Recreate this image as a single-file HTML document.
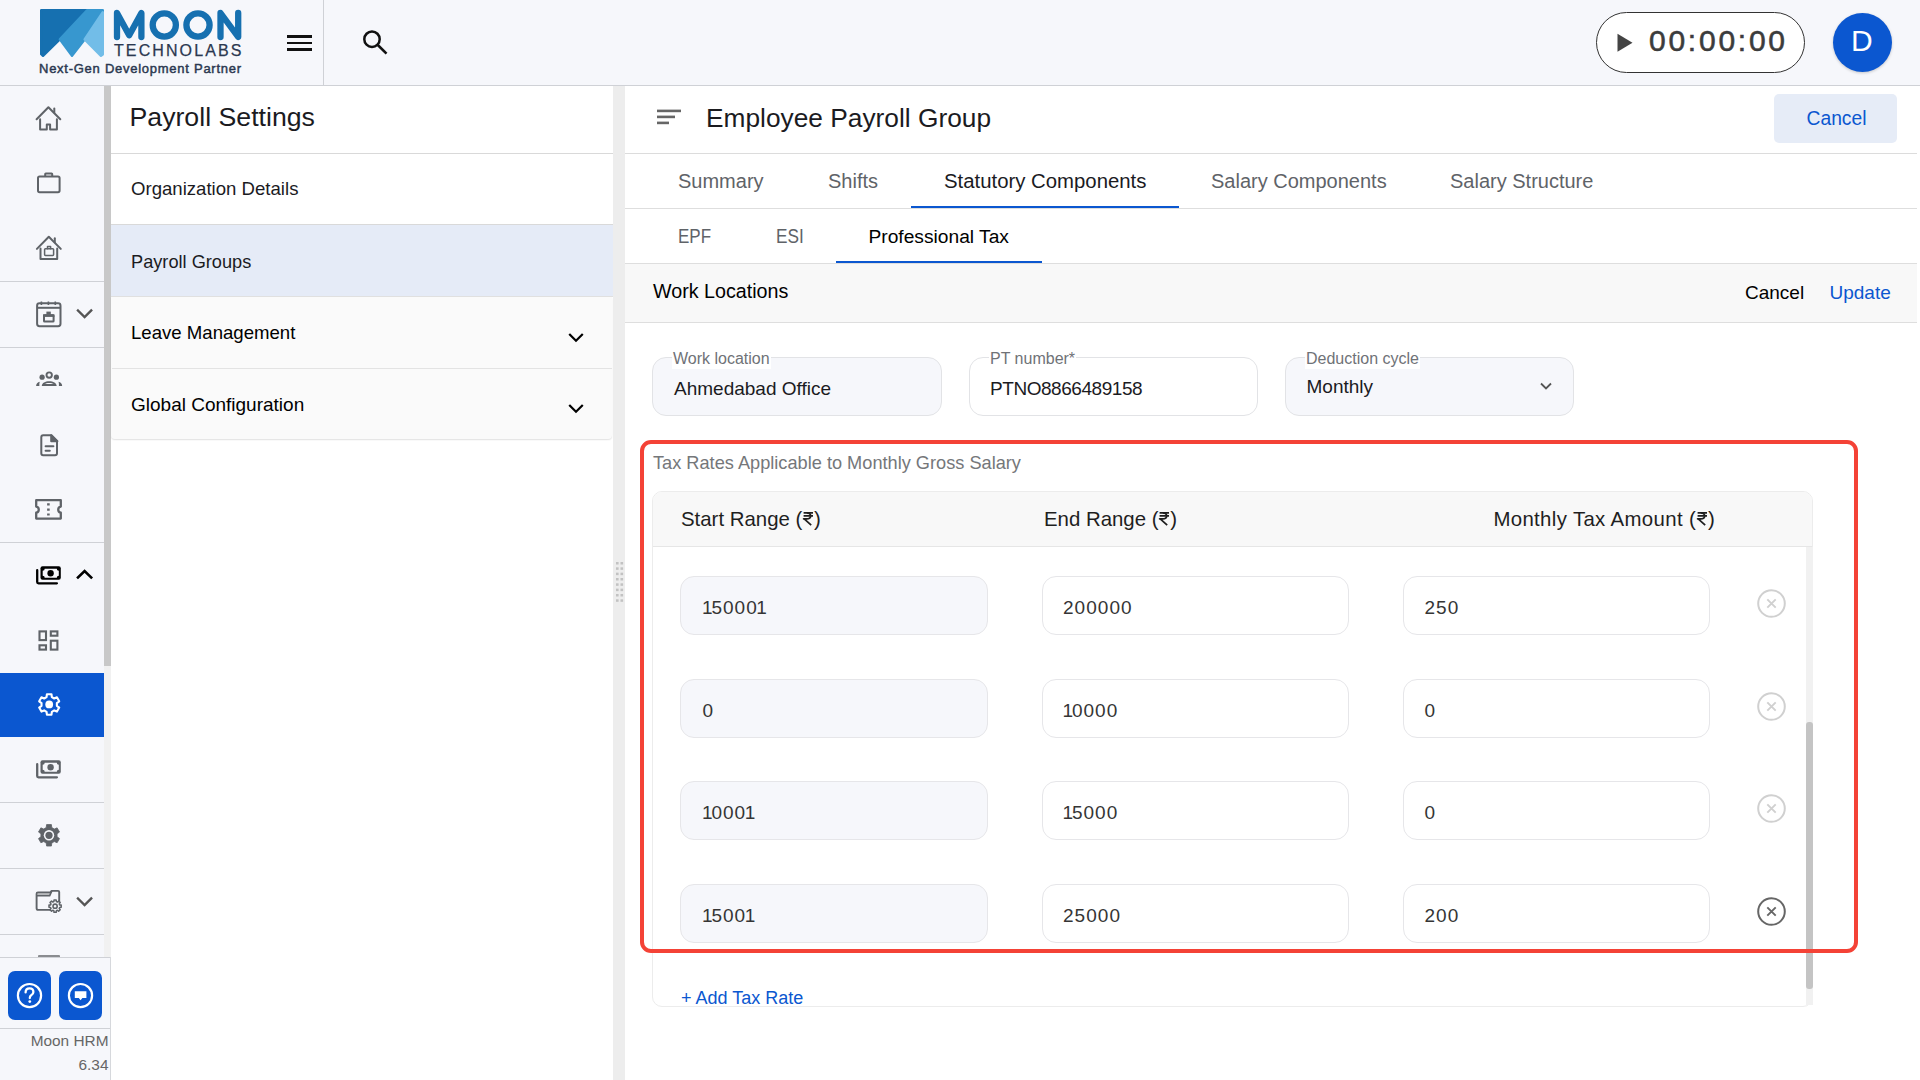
<!DOCTYPE html>
<html><head><meta charset="utf-8"><title>Payroll Settings</title>
<style>
*{margin:0;padding:0;box-sizing:border-box}
html,body{width:1920px;height:1080px;overflow:hidden;background:#fff;font-family:"Liberation Sans",sans-serif;color:#1f1f1f}
.a{position:absolute}
.t{position:absolute;white-space:nowrap;line-height:1}
svg{position:absolute;overflow:visible}
#hdr{left:0;top:0;width:1920px;height:85px;background:#f6f7fb}
#hdrb{left:0;top:85px;width:1920px;height:1px;background:#cfd1d6}
#nav{left:0;top:86px;width:104px;height:871px;background:#f6f7fb}
#navsb{left:104px;top:86px;width:7px;height:871px;background:#f1f1f1}
#navth{left:104px;top:86px;width:7px;height:580px;background:#c8c8c8}
.ndiv{position:absolute;left:0;width:104px;height:1px;background:#cfd1d6}
#panel{left:111px;top:86px;width:502px;height:994px;background:#fff}
#resz{left:613px;top:86px;width:12px;height:994px;background:#ededed}
#main{left:625px;top:86px;width:1295px;height:994px;background:#fff}
.hl{position:absolute;height:1px;background:#dedede}
.fld{position:absolute;height:59px;border:1px solid #e2e3e6;border-radius:14px;background:#f6f7fb}
.fld.w{background:#fff}
.lbl{position:absolute;background:#fff;color:#6f7277;font-size:16px;line-height:1;white-space:nowrap;padding:0 1px}
.inp{position:absolute;height:59px;border:1px solid #e6e6e9;border-radius:14px;background:#fff}
.inp.g{background:#f6f7fb}
.val{position:absolute;color:#333;font-size:19px;line-height:1;white-space:nowrap}
</style></head><body>

<!-- Top header -->
<div id="hdr" class="a"></div>
<div id="hdrb" class="a"></div>
<div class="a" style="left:323px;top:0;width:1px;height:85px;background:#cfd1d6"></div>

<!-- logo -->
<svg style="left:40px;top:9px" width="64" height="48" viewBox="0 0 64 48">
 <g stroke-linejoin="round" stroke-width="2.4">
 <polygon points="1.2,1.2 47,1.2 19.8,30.4 3,46.8 1.2,45.2" fill="#1670b0" stroke="#1670b0"/>
 <polygon points="47,1.2 62.8,1.2 62.8,3.2 44.6,30.4 32,46.8 19.8,30.4" fill="#3797cf" stroke="#3797cf"/>
 <polygon points="62.8,3.2 62.8,45.6 61,46.8 44.6,30.4" fill="#72bde8" stroke="#72bde8"/>
 </g>
</svg>
<svg style="left:110px;top:6px" width="136" height="38" viewBox="0 0 136 38">
 <g fill="none" stroke="#1670b0" stroke-width="6.3" stroke-linecap="round" stroke-linejoin="round">
  <path d="M7,31 V7 L19.2,29.2 L31.4,7 V31"/>
  <circle cx="54.3" cy="19" r="11.6"/>
  <circle cx="88" cy="19" r="11.6"/>
  <path d="M110.5,31 V7 L128.2,31 V7"/>
 </g>
</svg>
<div class="t" style="left:114px;top:42.8px;font-size:16px;letter-spacing:2.1px;color:#2b3850;-webkit-text-stroke:0.25px #2b3850">TECHNOLABS</div>
<div class="t" style="left:39px;top:62px;font-size:13px;letter-spacing:0.74px;color:#2b3850;-webkit-text-stroke:0.45px #2b3850">Next-Gen Development Partner</div>

<!-- hamburger -->
<div class="a" style="left:287px;top:35px;width:25px;height:2.6px;background:#111"></div>
<div class="a" style="left:287px;top:41.7px;width:25px;height:2.6px;background:#111"></div>
<div class="a" style="left:287px;top:48.2px;width:25px;height:2.6px;background:#111"></div>
<!-- search -->
<svg style="left:360px;top:27px" width="30" height="30" viewBox="0 0 30 30">
 <circle cx="12" cy="12.2" r="7.7" fill="none" stroke="#111" stroke-width="2.5"/>
 <path d="M17.8,18 L26.5,26.6" stroke="#111" stroke-width="2.6"/>
</svg>

<!-- timer -->
<div class="a" style="left:1596px;top:12px;width:209px;height:61px;border:1.2px solid #333;border-radius:31px;background:#fff"></div>
<svg style="left:1617px;top:33px" width="16" height="20" viewBox="0 0 16 20"><path d="M0.5,0.8 L15.5,9.7 L0.5,18.8 Z" fill="#444"/></svg>
<div class="t" style="left:1649px;top:26px;font-size:30px;letter-spacing:2.75px;color:#3c3c3c;-webkit-text-stroke:0.55px #3c3c3c">00:00:00</div>

<!-- avatar -->
<div class="a" style="left:1833px;top:13px;width:59px;height:59px;border-radius:50%;background:#0b57d0;box-shadow:0 1px 3px rgba(0,0,0,.2)"></div>
<div class="t" style="left:1851px;top:26px;font-size:30px;color:#fff">D</div>

<!-- Left nav -->
<div id="nav" class="a"></div>
<div id="navsb" class="a"></div>
<div id="navth" class="a"></div>


<!-- nav dividers -->
<div class="ndiv" style="top:281px"></div>
<div class="ndiv" style="top:347px"></div>
<div class="ndiv" style="top:542px"></div>
<div class="ndiv" style="top:802px"></div>
<div class="ndiv" style="top:868px"></div>
<div class="ndiv" style="top:934px"></div>
<!-- active -->
<div class="a" style="left:0;top:673px;width:104px;height:64px;background:#0b57d0"></div>

<!-- home -->
<svg style="left:32px;top:102px" width="34" height="34" viewBox="0 0 34 34" fill="none" stroke="#5f6368" stroke-width="2" stroke-linecap="round" stroke-linejoin="round">
 <path d="M4.6,17.2 L16.4,5.2 L28.3,17.2"/><path d="M22.3,6.5 V10.6"/>
 <path d="M8.1,17.2 V27.4 H14.8 V22.5 H18.1 V27.4 H24.9 V17.2"/>
</svg>
<!-- briefcase -->
<svg style="left:32px;top:166px" width="34" height="34" viewBox="0 0 34 34" fill="none" stroke="#5f6368" stroke-width="2" stroke-linejoin="round">
 <rect x="6" y="10.4" width="21.6" height="15.8" rx="1.6"/>
 <path d="M13.2,10.4 V8 Q13.2,7.4 13.8,7.4 H19.6 Q20.2,7.4 20.2,8 V10.4"/>
</svg>
<!-- home work -->
<svg style="left:32px;top:230px" width="34" height="34" viewBox="0 0 34 34" fill="none" stroke="#5f6368" stroke-width="2" stroke-linecap="round" stroke-linejoin="round">
 <path d="M4.9,18.9 L16.8,6.8 L28.8,18.9"/><path d="M22.8,8.3 V12.3"/>
 <path d="M8.5,18.6 V29 H25.2 V18.6"/>
 <rect x="12.6" y="18.8" width="9" height="6.6" rx="0.8" stroke-width="1.5"/>
 <path d="M15.5,18.8 V16.6 H18.6 V18.8" stroke-width="1.5"/>
</svg>
<!-- calendar work -->
<svg style="left:32px;top:296px" width="34" height="34" viewBox="0 0 34 34" fill="none" stroke="#5f6368" stroke-width="2" stroke-linejoin="round">
 <rect x="5.1" y="7.3" width="23.4" height="22.9" rx="2.4"/>
 <path d="M5.1,11.8 H28.5"/>
 <path d="M9.4,5.6 V9 M16.4,5.6 V9 M23.3,5.6 V9" stroke-width="1.6"/>
 <rect x="12" y="19.2" width="9.6" height="6.4" rx="0.6"/>
 <rect x="14.4" y="15.6" width="4.4" height="3" fill="#5f6368" stroke="none"/>
 <rect x="11" y="18.3" width="11.4" height="2.6" fill="#5f6368" stroke="none"/>
</svg>
<svg style="left:76px;top:308px" width="18" height="12" viewBox="0 0 18 12" fill="none" stroke="#555" stroke-width="2.4" stroke-linecap="square"><path d="M2,2.5 L8.6,9 L15.2,2.5"/></svg>
<!-- groups -->
<svg style="left:32px;top:362px" width="34" height="34" viewBox="0 0 34 34" fill="#5f6368">
 <circle cx="17.2" cy="13.1" r="2.7" fill="none" stroke="#5f6368" stroke-width="1.9"/>
 <circle cx="10.1" cy="15.2" r="2.6"/><circle cx="24.4" cy="15.2" r="2.6"/>
 <path d="M9.8,23.9 C10,20.8 13.2,19.2 17.2,19.2 C21.2,19.2 24.4,20.8 24.7,23.9 Z M12.8,22.1 H21.7 C20.8,21.2 19.2,20.9 17.2,20.9 C15.2,20.9 13.6,21.2 12.8,22.1 Z" fill-rule="evenodd"/>
 <path d="M4.1,23.9 C4.1,21.8 5.6,20.3 7.8,19.8 C7.3,21 7.3,22.6 7.4,23.9 Z"/>
 <path d="M30.2,23.9 C30.2,21.8 28.7,20.3 26.5,19.8 C27,21 27,22.6 26.9,23.9 Z"/>
</svg>
<!-- document -->
<svg style="left:32px;top:428px" width="34" height="34" viewBox="0 0 34 34" fill="none" stroke="#5f6368" stroke-width="2" stroke-linejoin="round">
 <path d="M11.2,7.3 H19.4 L25,12.9 V25.2 Q25,27.2 23,27.2 H11.2 Q9.3,27.2 9.3,25.2 V9.3 Q9.3,7.3 11.2,7.3 Z"/>
 <path d="M19.2,7.3 V13.2 H25.4 Z" fill="#5f6368"/>
 <path d="M13.6,18.3 H21.4 M13.6,22.8 H17.8" stroke-linecap="round"/>
</svg>
<!-- ticket -->
<svg style="left:32px;top:492px" width="34" height="34" viewBox="0 0 34 34" fill="none" stroke="#5f6368" stroke-width="2.3" stroke-linejoin="round">
 <path d="M4.2,8.2 H28.8 V14.6 A3.1,3.1 0 0 0 28.8,20.7 V26.6 H4.2 V20.7 A3.1,3.1 0 0 0 4.2,14.6 Z"/>
 <path d="M16.4,11.2 V13.4 M16.4,16.5 V18.7 M16.4,21.4 V23.6" stroke-width="2.6"/>
</svg>
<!-- payments black -->
<svg style="left:32px;top:558px" width="34" height="34" viewBox="0 0 34 34">
 <rect x="8.5" y="8.3" width="20.3" height="13.4" rx="2" fill="#000"/>
 <path d="M12.7,10.7 H24.8 A2,2 0 0 0 26.8,12.7 V17.8 A2,2 0 0 0 24.8,19.8 H12.7 A2,2 0 0 0 10.7,17.8 V12.7 A2,2 0 0 0 12.7,10.7 Z" fill="#f6f7fb"/>
 <circle cx="18.6" cy="15.3" r="3.2" fill="#000"/>
 <path d="M5.2,12.2 V24 Q5.2,25.3 6.5,25.3 H24.9" fill="none" stroke="#000" stroke-width="2.3" stroke-linecap="round"/>
</svg>
<svg style="left:76px;top:568px" width="18" height="12" viewBox="0 0 18 12" fill="none" stroke="#000" stroke-width="2.6" stroke-linecap="square"><path d="M2,9.5 L8.6,3 L15.2,9.5"/></svg>
<!-- dashboard -->
<svg style="left:32px;top:623px" width="34" height="34" viewBox="0 0 34 34" fill="none" stroke="#5f6368" stroke-width="2.1">
 <rect x="7.5" y="8.4" width="6.5" height="8.7"/><rect x="18.8" y="8.4" width="6.6" height="4.3"/>
 <rect x="7.5" y="22.3" width="6.5" height="4.3"/><rect x="18.8" y="17.7" width="6.6" height="8.9"/>
</svg>


<!-- gear active -->
<svg style="left:32px;top:687px" width="34" height="34" viewBox="0 0 34 34">
 <path d="M14.56,10.11 L14.91,7.20 L19.49,7.20 L19.84,10.11 L22.23,11.49 L24.93,10.34 L27.22,14.31 L24.88,16.07 L24.88,18.83 L27.22,20.59 L24.93,24.56 L22.23,23.41 L19.84,24.79 L19.49,27.70 L14.91,27.70 L14.56,24.79 L12.17,23.41 L9.47,24.56 L7.18,20.59 L9.52,18.83 L9.52,16.07 L7.18,14.31 L9.47,10.34 L12.17,11.49 Z" fill="none" stroke="#fff" stroke-width="2.1" stroke-linejoin="round"/>
 <circle cx="17.2" cy="17.45" r="3.9" fill="#fff"/>
</svg>
<!-- payments gray -->
<svg style="left:32px;top:752px" width="34" height="34" viewBox="0 0 34 34">
 <rect x="8.5" y="8.3" width="20.3" height="13.4" rx="2" fill="#5f6368"/>
 <path d="M12.7,10.7 H24.8 A2,2 0 0 0 26.8,12.7 V17.8 A2,2 0 0 0 24.8,19.8 H12.7 A2,2 0 0 0 10.7,17.8 V12.7 A2,2 0 0 0 12.7,10.7 Z" fill="#f6f7fb"/>
 <circle cx="18.6" cy="15.3" r="3.2" fill="#5f6368"/>
 <path d="M5.2,12.2 V24 Q5.2,25.3 6.5,25.3 H24.9" fill="none" stroke="#5f6368" stroke-width="2.3" stroke-linecap="round"/>
</svg>
<!-- gear gray filled -->
<svg style="left:32px;top:818px" width="34" height="34" viewBox="0 0 34 34">
 <path d="M14.22,9.58 L14.60,6.56 L19.40,6.56 L19.78,9.58 L22.29,11.04 L25.10,9.85 L27.50,14.01 L25.07,15.85 L25.07,18.75 L27.50,20.59 L25.10,24.75 L22.29,23.56 L19.78,25.02 L19.40,28.04 L14.60,28.04 L14.22,25.02 L11.71,23.56 L8.90,24.75 L6.50,20.59 L8.93,18.75 L8.93,15.85 L6.50,14.01 L8.90,9.85 L11.71,11.04 Z" fill="#5f6368" stroke="#5f6368" stroke-width="0.8" stroke-linejoin="round"/>
 <circle cx="17" cy="17.3" r="5.2" fill="#f6f7fb"/>
 <circle cx="17" cy="17.3" r="3.6" fill="#5f6368"/>
</svg>
<!-- folder gear -->
<svg style="left:32px;top:884px" width="34" height="34" viewBox="0 0 34 34" fill="none" stroke="#5f6368" stroke-width="1.9" stroke-linejoin="round">
 <path d="M18.5,25.9 H6.2 Q4.6,25.9 4.6,24.3 V9.8 Q4.6,8.5 5.9,8.5 H18.4 L19.7,6.9 H26 Q27.2,6.9 27.2,8.1 V18.3"/>
 <path d="M4.6,11.6 H17.6 L19.7,6.9" />
 <path d="M5.6,9.4 H17.8 L17.2,10.8 H5.6 Z" fill="#aeafb2" stroke="none"/>
 <path d="M21.84,17.67 L22.01,16.10 L24.19,16.10 L24.36,17.67 L25.41,18.11 L26.65,17.11 L28.19,18.65 L27.19,19.89 L27.63,20.94 L29.20,21.11 L29.20,23.29 L27.63,23.46 L27.19,24.51 L28.19,25.75 L26.65,27.29 L25.41,26.29 L24.36,26.73 L24.19,28.30 L22.01,28.30 L21.84,26.73 L20.79,26.29 L19.55,27.29 L18.01,25.75 L19.01,24.51 L18.57,23.46 L17.00,23.29 L17.00,21.11 L18.57,20.94 L19.01,19.89 L18.01,18.65 L19.55,17.11 L20.79,18.11 Z" stroke-width="1.5"/>
 <circle cx="23.1" cy="22.2" r="2.1" stroke-width="1.6"/>
</svg>
<svg style="left:76px;top:896px" width="18" height="12" viewBox="0 0 18 12" fill="none" stroke="#555" stroke-width="2.4" stroke-linecap="square"><path d="M2,2.5 L8.6,9 L15.2,2.5"/></svg>
<!-- partial icon -->
<div class="a" style="left:38px;top:955px;width:22px;height:2px;background:#8a8c90;border-radius:1px 1px 0 0"></div>

<!-- bottom section -->
<div class="a" style="left:0;top:957px;width:111px;height:123px;background:#f6f7fb"></div>
<div class="a" style="left:0;top:957px;width:111px;height:1px;background:#cfd1d6"></div>
<div class="a" style="left:0;top:1028px;width:111px;height:1px;background:#cfd1d6"></div>
<div class="a" style="left:110px;top:957px;width:1px;height:123px;background:#d6d8dc"></div>
<div class="a" style="left:8px;top:971px;width:43px;height:49px;border-radius:7px;background:#0b57d0"></div>
<div class="a" style="left:59px;top:971px;width:43px;height:49px;border-radius:7px;background:#0b57d0"></div>
<svg style="left:8px;top:971px" width="43" height="49" viewBox="0 0 43 49">
 <circle cx="21.5" cy="24.6" r="11.6" fill="none" stroke="#fff" stroke-width="2.2"/>
 <path d="M17.6,21.4 Q17.6,17.4 21.6,17.4 Q25.4,17.4 25.4,21 Q25.4,23 23.2,24.2 Q21.8,25 21.8,27" fill="none" stroke="#fff" stroke-width="2.3" stroke-linecap="round"/>
 <circle cx="21.8" cy="30.6" r="1.4" fill="#fff"/>
</svg>
<svg style="left:59px;top:971px" width="43" height="49" viewBox="0 0 43 49">
 <circle cx="21.5" cy="24.6" r="11.6" fill="none" stroke="#fff" stroke-width="2.2"/>
 <path d="M15.8,20.2 H27.4 V27 H23.4 L21.6,29.2 L19.8,27 H15.8 Z" fill="#fff"/>
</svg>
<div class="t" style="right:1811.5px;top:1033.3px;font-size:15.4px;color:#666">Moon HRM</div>
<div class="t" style="right:1811.5px;top:1057.3px;font-size:15.4px;color:#666">6.34</div>

<!-- Payroll panel -->
<div id="panel" class="a"></div>
<div class="t" style="left:129.5px;top:103.90px;font-size:26.7px;color:#1b1b1f;">Payroll Settings</div>
<div class="hl" style="left:111px;top:153px;width:502px;background:#d9d9d9"></div>
<div class="t" style="left:131px;top:179.92px;font-size:18.6px;color:#1b1b1f;">Organization Details</div>
<div class="hl" style="left:111px;top:224px;width:502px;background:#d9d9d9"></div>
<div class="a" style="left:111px;top:225px;width:502px;height:71px;background:#e5ebf7"></div>
<div class="t" style="left:131px;top:252.59px;font-size:18.2px;color:#1b1b1f;">Payroll Groups</div>
<div class="a" style="left:111px;top:296px;width:502px;height:1px;background:#e0e0e0"></div>
<div class="a" style="left:111px;top:297px;width:501px;height:142px;background:#fafafa;box-shadow:0 1px 1.5px rgba(0,0,0,.12);border-radius:0 0 4px 4px"></div>
<div class="a" style="left:112px;top:368px;width:500px;height:1px;background:#e3e3e3"></div>
<div class="t" style="left:131px;top:323.76px;font-size:18.6px;color:#000;">Leave Management</div>
<div class="t" style="left:131px;top:394.92px;font-size:19px;color:#000;">Global Configuration</div>
<svg style="left:567px;top:332px" width="18" height="12" viewBox="0 0 18 12" fill="none" stroke="#000" stroke-width="2.2" stroke-linecap="square"><path d="M3,2.8 L9,8.8 L15,2.8"/></svg>
<svg style="left:567px;top:403px" width="18" height="12" viewBox="0 0 18 12" fill="none" stroke="#000" stroke-width="2.2" stroke-linecap="square"><path d="M3,2.8 L9,8.8 L15,2.8"/></svg>
<div id="resz" class="a"></div>
<svg style="left:616.2px;top:562px" width="8" height="42" viewBox="0 0 8 42" fill="#c2c2c2"><rect x="0" y="0.00" width="2.6" height="2.5"/><rect x="4.5" y="0.00" width="2.6" height="2.5"/><rect x="0" y="5.33" width="2.6" height="2.5"/><rect x="4.5" y="5.33" width="2.6" height="2.5"/><rect x="0" y="10.66" width="2.6" height="2.5"/><rect x="4.5" y="10.66" width="2.6" height="2.5"/><rect x="0" y="15.99" width="2.6" height="2.5"/><rect x="4.5" y="15.99" width="2.6" height="2.5"/><rect x="0" y="21.32" width="2.6" height="2.5"/><rect x="4.5" y="21.32" width="2.6" height="2.5"/><rect x="0" y="26.65" width="2.6" height="2.5"/><rect x="4.5" y="26.65" width="2.6" height="2.5"/><rect x="0" y="31.98" width="2.6" height="2.5"/><rect x="4.5" y="31.98" width="2.6" height="2.5"/><rect x="0" y="37.31" width="2.6" height="2.5"/><rect x="4.5" y="37.31" width="2.6" height="2.5"/></svg>


<!-- Main -->
<div id="main" class="a"></div>
<svg style="left:657px;top:109px" width="24" height="17" viewBox="0 0 24 17"><rect x="0" y="0.6" width="24" height="2.6" fill="#666"/><rect x="0" y="6.6" width="18" height="2.6" fill="#666"/><rect x="0" y="12.6" width="12" height="2.6" fill="#666"/></svg>
<div class="t" style="left:706px;top:104.54px;font-size:26.3px;color:#1b1b1f;">Employee Payroll Group</div>
<div class="a" style="left:1774px;top:94px;width:123px;height:49px;border-radius:5px;background:#e6ecf7"></div>
<div class="t" style="left:1806.5px;top:108.56px;font-size:19.3px;color:#0b57d0;">Cancel</div>
<div class="hl" style="left:625px;top:153px;width:1292px;background:#dcdcdc"></div>
<div class="t" style="left:678px;top:171.37px;font-size:20px;color:#5f6368;">Summary</div>
<div class="t" style="left:828px;top:171.37px;font-size:20px;color:#5f6368;">Shifts</div>
<div class="t" style="left:944px;top:171.07px;font-size:20.35px;color:#1b1b1f;">Statutory Components</div>
<div class="t" style="left:1211px;top:171.37px;font-size:20px;color:#5f6368;">Salary Components</div>
<div class="t" style="left:1450px;top:171.37px;font-size:20px;color:#5f6368;">Salary Structure</div>
<div class="hl" style="left:625px;top:208px;width:1292px;background:#dedede"></div>
<div class="a" style="left:911px;top:205.5px;width:268px;height:2.5px;background:#0b57d0"></div>
<div class="t" style="left:678px;top:226.07px;font-size:20px;color:#5f6368;transform:scaleX(0.85);transform-origin:0 0;">EPF</div>
<div class="t" style="left:776px;top:226.07px;font-size:20px;color:#5f6368;transform:scaleX(0.86);transform-origin:0 0;">ESI</div>
<div class="t" style="left:868.5px;top:226.75px;font-size:19.2px;color:#000;">Professional Tax</div>
<div class="a" style="left:836px;top:260.5px;width:206px;height:2.5px;background:#0b57d0"></div>
<div class="hl" style="left:625px;top:263px;width:1292px;background:#dedede"></div>
<div class="a" style="left:625px;top:264px;width:1292px;height:58px;background:#f8f8f8"></div>
<div class="t" style="left:653px;top:282.22px;font-size:19.7px;color:#000;">Work Locations</div>
<div class="t" style="left:1745px;top:283.22px;font-size:19px;color:#000;">Cancel</div>
<div class="t" style="left:1829.5px;top:283.22px;font-size:19px;color:#0b57d0;">Update</div>
<div class="hl" style="left:625px;top:322px;width:1292px;background:#dedede"></div>
<div class="fld" style="left:652px;top:357px;width:290px"></div>
<div class="fld w" style="left:969px;top:357px;width:289px"></div>
<div class="fld" style="left:1285px;top:357px;width:289px"></div>
<div class="lbl" style="left:672px;top:348.66px;padding:2px 1px">Work location</div>
<div class="lbl" style="left:989px;top:348.66px;padding:2px 1px">PT number*</div>
<div class="lbl" style="left:1305px;top:348.66px;padding:2px 1px">Deduction cycle</div>
<div class="t" style="left:674px;top:378.92px;font-size:19px;color:#1b1b1f;">Ahmedabad Office</div>
<div class="t" style="left:990px;top:378.92px;font-size:19px;color:#1b1b1f;letter-spacing:-0.45px">PTNO8866489158</div>
<div class="t" style="left:1306.5px;top:376.52px;font-size:19px;color:#1b1b1f;">Monthly</div>
<svg style="left:1538px;top:380px" width="16" height="12" viewBox="0 0 16 12" fill="none" stroke="#555" stroke-width="1.8"><path d="M3,3.5 L8,8.5 L13,3.5"/></svg>

<div class="t" style="left:653px;top:454.19px;font-size:18.2px;color:#75777a;">Tax Rates Applicable to Monthly Gross Salary</div>
<div class="a" style="left:652px;top:491px;width:1161px;height:516px;border:1px solid #ececec;border-radius:10px;background:#fff;overflow:hidden"><div style="position:absolute;left:0;top:0;width:100%;height:55px;background:#f8f8f8;border-bottom:1px solid #e6e6e6"></div></div>
<div class="t" style="left:681px;top:508.83px;font-size:20.4px;color:#1f1f1f;">Start Range (<svg style="position:static;display:inline-block;vertical-align:baseline;margin:0 0.6px 0 0.6px" width="10.6" height="13.4" viewBox="0 0 10.6 13.4" fill="none" stroke="currentColor" stroke-width="1.75"><path d="M0.6,0.9 H10 M0.6,3.9 H10"/><path d="M3.8,0.9 C6.4,0.9 7.6,2.2 7.6,3.9 C7.6,5.6 6.2,6.8 3.8,6.8 H0.6 L1.2,6.8 L8.2,13.2" stroke-linejoin="round"/></svg>)</div>
<div class="t" style="left:1044px;top:508.83px;font-size:20.4px;color:#1f1f1f;">End Range (<svg style="position:static;display:inline-block;vertical-align:baseline;margin:0 0.6px 0 0.6px" width="10.6" height="13.4" viewBox="0 0 10.6 13.4" fill="none" stroke="currentColor" stroke-width="1.75"><path d="M0.6,0.9 H10 M0.6,3.9 H10"/><path d="M3.8,0.9 C6.4,0.9 7.6,2.2 7.6,3.9 C7.6,5.6 6.2,6.8 3.8,6.8 H0.6 L1.2,6.8 L8.2,13.2" stroke-linejoin="round"/></svg>)</div>
<div class="t" style="left:1493.4px;top:508.83px;font-size:20.4px;color:#1f1f1f;letter-spacing:0.35px">Monthly Tax Amount (<svg style="position:static;display:inline-block;vertical-align:baseline;margin:0 0.6px 0 0.6px" width="10.6" height="13.4" viewBox="0 0 10.6 13.4" fill="none" stroke="currentColor" stroke-width="1.75"><path d="M0.6,0.9 H10 M0.6,3.9 H10"/><path d="M3.8,0.9 C6.4,0.9 7.6,2.2 7.6,3.9 C7.6,5.6 6.2,6.8 3.8,6.8 H0.6 L1.2,6.8 L8.2,13.2" stroke-linejoin="round"/></svg>)</div>
<div class="a" style="left:1806px;top:547px;width:6.5px;height:458px;background:#f1f1f1"></div>
<div class="a" style="left:1806px;top:722px;width:6.5px;height:267px;background:#c4c4c4;border-radius:3px"></div>
<div class="inp g" style="left:680px;top:576px;width:308px"></div>
<div class="inp" style="left:1042px;top:576px;width:307px"></div>
<div class="inp" style="left:1403px;top:576px;width:307px"></div>
<div class="t" style="left:702.5px;top:598.12px;font-size:19px;letter-spacing:1.05px;color:#353535;"><span style="letter-spacing:-1.3px;margin-left:-0.4px">1</span>5000<span style="letter-spacing:-1.3px;margin-left:-1.6px">1</span></div>
<div class="t" style="left:1063px;top:598.12px;font-size:19px;letter-spacing:1.05px;color:#353535;">200000</div>
<div class="t" style="left:1424.5px;top:598.12px;font-size:19px;letter-spacing:1.05px;color:#353535;">250</div>
<svg style="left:1757px;top:589.00px" width="29" height="29" viewBox="0 0 29 29" fill="none" stroke="#d0d0d0" stroke-width="2"><circle cx="14.5" cy="14.5" r="13.3"/><path d="M10.3,10.3 L18.7,18.7 M18.7,10.3 L10.3,18.7" stroke-width="1.9"/></svg>
<div class="inp g" style="left:680px;top:678.7px;width:308px"></div>
<div class="inp" style="left:1042px;top:678.7px;width:307px"></div>
<div class="inp" style="left:1403px;top:678.7px;width:307px"></div>
<div class="t" style="left:702.5px;top:700.82px;font-size:19px;letter-spacing:1.05px;color:#353535;">0</div>
<div class="t" style="left:1063px;top:700.82px;font-size:19px;letter-spacing:1.05px;color:#353535;"><span style="letter-spacing:-1.3px;margin-left:-0.4px">1</span>0000</div>
<div class="t" style="left:1424.5px;top:700.82px;font-size:19px;letter-spacing:1.05px;color:#353535;">0</div>
<svg style="left:1757px;top:691.70px" width="29" height="29" viewBox="0 0 29 29" fill="none" stroke="#d0d0d0" stroke-width="2"><circle cx="14.5" cy="14.5" r="13.3"/><path d="M10.3,10.3 L18.7,18.7 M18.7,10.3 L10.3,18.7" stroke-width="1.9"/></svg>
<div class="inp g" style="left:680px;top:781.3px;width:308px"></div>
<div class="inp" style="left:1042px;top:781.3px;width:307px"></div>
<div class="inp" style="left:1403px;top:781.3px;width:307px"></div>
<div class="t" style="left:702.5px;top:803.42px;font-size:19px;letter-spacing:1.05px;color:#353535;"><span style="letter-spacing:-1.3px;margin-left:-0.4px">1</span>000<span style="letter-spacing:-1.3px;margin-left:-1.6px">1</span></div>
<div class="t" style="left:1063px;top:803.42px;font-size:19px;letter-spacing:1.05px;color:#353535;"><span style="letter-spacing:-1.3px;margin-left:-0.4px">1</span>5000</div>
<div class="t" style="left:1424.5px;top:803.42px;font-size:19px;letter-spacing:1.05px;color:#353535;">0</div>
<svg style="left:1757px;top:794.30px" width="29" height="29" viewBox="0 0 29 29" fill="none" stroke="#d0d0d0" stroke-width="2"><circle cx="14.5" cy="14.5" r="13.3"/><path d="M10.3,10.3 L18.7,18.7 M18.7,10.3 L10.3,18.7" stroke-width="1.9"/></svg>
<div class="inp g" style="left:680px;top:884px;width:308px"></div>
<div class="inp" style="left:1042px;top:884px;width:307px"></div>
<div class="inp" style="left:1403px;top:884px;width:307px"></div>
<div class="t" style="left:702.5px;top:906.12px;font-size:19px;letter-spacing:1.05px;color:#353535;"><span style="letter-spacing:-1.3px;margin-left:-0.4px">1</span>500<span style="letter-spacing:-1.3px;margin-left:-1.6px">1</span></div>
<div class="t" style="left:1063px;top:906.12px;font-size:19px;letter-spacing:1.05px;color:#353535;">25000</div>
<div class="t" style="left:1424.5px;top:906.12px;font-size:19px;letter-spacing:1.05px;color:#353535;">200</div>
<svg style="left:1757px;top:897.00px" width="29" height="29" viewBox="0 0 29 29" fill="none" stroke="#666" stroke-width="2"><circle cx="14.5" cy="14.5" r="13.3"/><path d="M10.3,10.3 L18.7,18.7 M18.7,10.3 L10.3,18.7" stroke-width="1.9"/></svg>
<div class="t" style="left:681px;top:989.14px;font-size:18px;color:#0b57d0;">+ Add Tax Rate</div>
<div class="a" style="left:640px;top:440px;width:1218px;height:513px;border:4.2px solid #f44236;border-radius:11px"></div>

</body></html>
